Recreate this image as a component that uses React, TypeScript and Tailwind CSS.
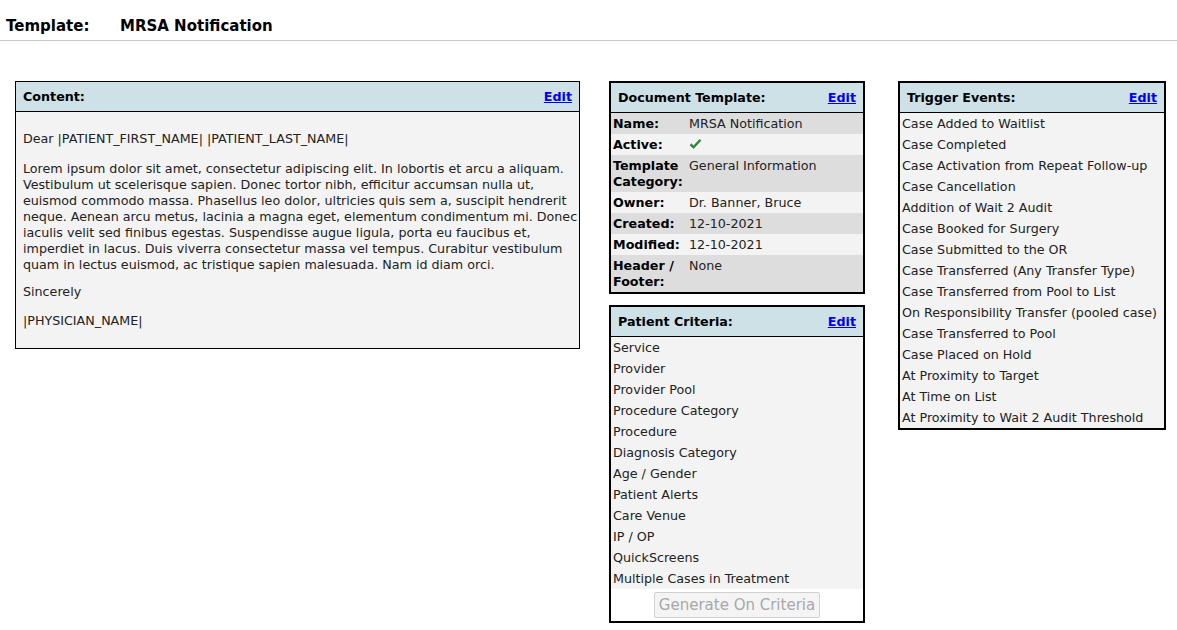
import React from "react";

const font = { fontFamily: '"DejaVu Sans", Verdana, sans-serif' };

function PanelHeader({ title }: { title: string }) {
  return (
    <div className="flex items-center justify-between bg-[#cde1e6] border-b border-black h-[30px] px-[7px] pt-[1px]">
      <span className="font-bold text-black">{title}</span>
      <a href="#" className="font-bold text-[#0000ee] underline">Edit</a>
    </div>
  );
}

function Check() {
  return (
    <svg width="13" height="11" viewBox="0 0 13 11" className="mt-[2px]">
      <path d="M1 6.2 L4.6 9.6 L12 1.6 L10.4 0.6 L4.5 6.9 L2.4 4.8 Z" fill="#2e8b3a" stroke="#1f6e2a" strokeWidth="0.6" strokeLinejoin="round" />
    </svg>
  );
}

const docRows: { label: React.ReactNode; value: React.ReactNode }[] = [
  { label: "Name:", value: "MRSA Notification" },
  { label: "Active:", value: <Check /> },
  { label: <>Template<br />Category:</>, value: "General Information" },
  { label: "Owner:", value: "Dr. Banner, Bruce" },
  { label: "Created:", value: "12-10-2021" },
  { label: "Modified:", value: "12-10-2021" },
  { label: <>Header /<br />Footer:</>, value: "None" },
];

const patientCriteria = [
  "Service", "Provider", "Provider Pool", "Procedure Category", "Procedure", "Diagnosis Category",
  "Age / Gender", "Patient Alerts", "Care Venue", "IP / OP", "QuickScreens", "Multiple Cases in Treatment",
];

const triggers = [
  "Case Added to Waitlist", "Case Completed", "Case Activation from Repeat Follow-up", "Case Cancellation",
  "Addition of Wait 2 Audit", "Case Booked for Surgery", "Case Submitted to the OR",
  "Case Transferred (Any Transfer Type)", "Case Transferred from Pool to List",
  "On Responsibility Transfer (pooled case)", "Case Transferred to Pool", "Case Placed on Hold",
  "At Proximity to Target", "At Time on List", "At Proximity to Wait 2 Audit Threshold",
];

const lorem = [
  "Lorem ipsum dolor sit amet, consectetur adipiscing elit. In lobortis et arcu a aliquam.",
  "Vestibulum ut scelerisque sapien. Donec tortor nibh, efficitur accumsan nulla ut,",
  "euismod commodo massa. Phasellus leo dolor, ultricies quis sem a, suscipit hendrerit",
  "neque. Aenean arcu metus, lacinia a magna eget, elementum condimentum mi. Donec",
  "iaculis velit sed finibus egestas. Suspendisse augue ligula, porta eu faucibus et,",
  "imperdiet in lacus. Duis viverra consectetur massa vel tempus. Curabitur vestibulum",
  "quam in lectus euismod, ac tristique sapien malesuada. Nam id diam orci.",
];

export default function App() {
  return (
    <div style={font} className="w-[1177px] h-[630px] bg-white text-[12.7px] leading-4 text-[#222] overflow-hidden">
      <div className="h-[41px] border-b border-[#c8c8c8] flex items-center pl-[6px] pt-[11px] text-[15px] font-bold text-black">
        <span className="w-[114px]">Template:</span>
        <span>MRSA Notification</span>
      </div>

      <div className="flex items-start pt-[40px] pl-[15px]">
        {/* Content */}
        <div className="w-[565px] border border-black bg-[#f3f3f3]">
          <PanelHeader title="Content:" />
          <div className="px-[7px] pt-[6px] pb-[6px]">
            <p className="mt-[13px] mb-[14px]">Dear |PATIENT_FIRST_NAME| |PATIENT_LAST_NAME|</p>
            <p className="mb-[11px]">
              {lorem.map((l, i) => (
                <span key={i} className="block whitespace-nowrap">{l}</span>
              ))}
            </p>
            <p className="mb-[13px]">Sincerely</p>
            <p className="mb-[13px]">|PHYSICIAN_NAME|</p>
          </div>
        </div>

        {/* Middle column */}
        <div className="ml-[29px] w-[256px] flex flex-col gap-[11px]">
          <div className="border-2 border-black">
            <PanelHeader title="Document Template:" />
            <div>
              {docRows.map((r, i) => (
                <div key={i} className={`flex pt-[3px] pb-[2px] ${i % 2 === 0 ? "bg-[#dddddd]" : "bg-[#f3f3f3]"}`}>
                  <div className="w-[78px] pl-[2px] font-bold text-black">{r.label}</div>
                  <div className="flex-1">{r.value}</div>
                </div>
              ))}
            </div>
          </div>

          <div className="border-2 border-black bg-white">
            <PanelHeader title="Patient Criteria:" />
            <div className="bg-[#f3f3f3]">
              {patientCriteria.map((c) => (
                <div key={c} className="pl-[2px] pt-[3px] pb-[2px]">{c}</div>
              ))}
            </div>
            <div className="flex justify-center pt-[3px] pb-[3px]">
              <button disabled className="w-[166px] h-[26px] border border-[#d0d0d0] rounded-[2px] bg-[#f4f4f4] text-[#a8a8a8] text-[15px]">
                Generate On Criteria
              </button>
            </div>
          </div>
        </div>

        {/* Trigger Events */}
        <div className="ml-[33px] w-[268px] border-2 border-black bg-[#f3f3f3]">
          <PanelHeader title="Trigger Events:" />
          <div>
            {triggers.map((t) => (
              <div key={t} className="pl-[2px] pt-[3px] pb-[2px] whitespace-nowrap">{t}</div>
            ))}
          </div>
        </div>
      </div>
    </div>
  );
}
